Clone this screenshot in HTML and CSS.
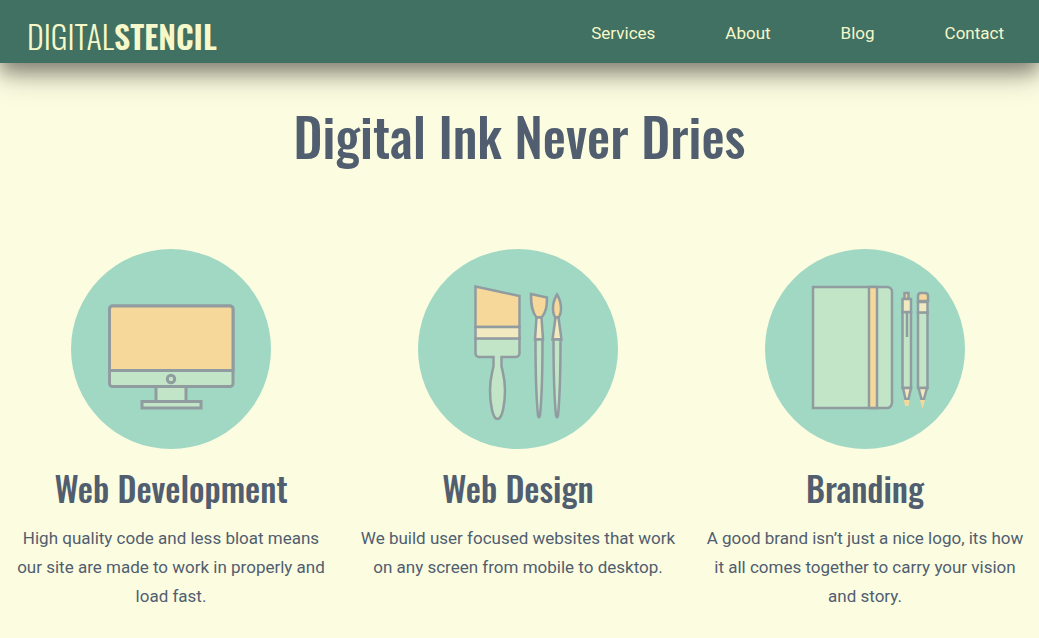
FILE: index.html
```html
<!DOCTYPE html>
<html lang="en">
<head>
<meta charset="utf-8">
<meta name="viewport" content="width=device-width, initial-scale=1">
<title>Digital Stencil</title>
<link rel="stylesheet" href="styles.css">
</head>
<body>
<header class="site-header">
  <a class="logo" href="#">DIGITAL<strong>STENCIL</strong></a>
  <nav class="site-nav">
    <a href="#services">Services</a>
    <a href="#about">About</a>
    <a href="#blog">Blog</a>
    <a href="#contact">Contact</a>
  </nav>
</header>
<main>
  <h1 class="headline">Digital Ink Never Dries</h1>
  <section class="services" id="services">
    <article class="service">
      <svg class="service-icon" viewBox="0 0 200 200" aria-hidden="true">
        <circle class="disc" cx="100" cy="100" r="100"/>
        <g class="heavy">
          <rect class="green" x="38.5" y="57" width="123.500" height="80.500" rx="3"/>
          <path class="orange" d="M38.500 121.500V60a3 3 0 0 1 3-3H159a3 3 0 0 1 3 3v61.500z"/>
          <circle class="green" cx="100" cy="130" r="3.700"/>
          <rect class="green" x="85" y="137.500" width="30" height="15"/>
          <rect class="green" x="71" y="152.500" width="59" height="6.500"/>
        </g>
      </svg>
      <h2>Web Development</h2>
      <p>High quality code and less bloat means our site are made to work in properly and load fast.</p>
    </article>
    <article class="service">
      <svg class="service-icon" viewBox="0 0 200 200" aria-hidden="true">
        <circle class="disc" cx="100" cy="100" r="100"/>
        <path class="green" d="M57.500 89v15.500a3.500 3.500 0 0 0 3.500 3.500h14.500v9C74 125 72 129 72 141c0 13 2.500 29 7.500 29s7.500-16 7.500-29c0-12-2-16-3.500-24v-9H98a3.500 3.500 0 0 0 3.500-3.500V89z"/>
        <path class="orange" d="M57.500 37.500l44 9.500v31h-44z"/>
        <path class="cream" d="M57.500 78h44v11.500h-44z"/>
        <path class="orange" d="M113 45l16 3.500c0 8-.5 14-5.500 20h-5c-5-6-5.500-14-5.500-23.500z"/>
        <path class="cream" d="M118.500 68.500h5l1.500 22h-8z"/>
        <path class="green" d="M117.500 90.500h7c0 33-1 61-2.500 76q-1 4-2 0c-1.500-15-2.500-43-2.500-76z"/>
        <path class="orange" d="M139 45.500c2.500 4 4 9 4 14q0 6-2.500 9h-3q-2.500-3-2.500-9c0-5 1.500-10 4-14z"/>
        <path class="cream" d="M137.500 68.500h3l3 22h-9z"/>
        <path class="green" d="M135.500 90.500h7c0 33-1 61-2.500 76q-1 4-2 0c-1.500-15-2.500-43-2.500-76z"/>
      </svg>
      <h2>Web Design</h2>
      <p>We build user focused websites that work on any screen from mobile to desktop.</p>
    </article>
    <article class="service">
      <svg class="service-icon" viewBox="0 0 200 200" aria-hidden="true">
        <circle class="disc" cx="100" cy="100" r="100"/>
        <path class="green" d="M48 38h74.500a4.500 4.500 0 0 1 4.500 4.500V154q-1 5-5 5H48z"/>
        <path class="orange" d="M104 38h8v121h-8z"/>
        <path class="orange" d="M139.500 44h4v6h-4zM153 52v-5q0-3 3-3h4q3 0 3 3v5z"/>
        <path class="green" d="M137.500 63h8.500v76h-8.500zM153 63h9.500v76H153z"/>
        <path class="cream" d="M137.500 50h8.500v13h-8.500zM153 53h9.500v10.500H153z"/>
        <path class="cream" d="M138 139h8l-2.500 11h-3zM153.500 139h8.500l-3 11h-2.500z"/>
        <path class="outline" d="M142 63v25"/>
        <path class="tip" d="M139 151h5.500l-1 6h-3.500zM155 151h5l-2.500 9z"/>
      </svg>
      <h2>Branding</h2>
      <p>A good brand isn’t just a nice logo, its how it all comes together to carry your vision and story.</p>
    </article>
  </section>
</main>
</body>
</html>
```
FILE: styles.css
```css
* {
  box-sizing: border-box;
}

body {
  margin: 0;
  background: #fcfce1;
  color: #505e70;
  font-family: Roboto, "Liberation Sans", sans-serif;
  font-size: 17px;
  line-height: 29px;
}

.site-header {
  position: relative;
  display: flex;
  align-items: center;
  justify-content: space-between;
  padding: 4px 35px 0 27px;
  min-height: 63px;
  background: #417162;
  box-shadow: 0 14px 28px rgba(0, 0, 0, 0.26), 0 8px 16px rgba(0, 0, 0, 0.3);
}

.site-header a {
  color: #f7f8c9;
  text-decoration: none;
}

.logo {
  padding-top: 4px;
  font-family: Oswald, "Liberation Sans Narrow", sans-serif;
  font-size: 32px;
  font-weight: 300;
}

.logo strong {
  font-weight: 600;
}

.site-nav {
  display: flex;
  gap: 70px;
}

.headline,
.service h2 {
  font-family: Oswald, "Liberation Sans Narrow", sans-serif;
  font-weight: 500;
  text-align: center;
}

.headline {
  margin: 34px 16px 74px;
  font-size: 52px;
  line-height: 78px;
}

.services {
  display: grid;
  grid-template-columns: repeat(3, 1fr);
  gap: 5px;
  padding-right: 3px;
}

.service {
  padding: 0 10px;
  text-align: center;
}

.service-icon {
  display: block;
  width: 200px;
  height: 200px;
  margin: 0 auto;
  stroke: #909ca0;
  stroke-width: 2.5;
}

.service h2 {
  margin: 15px 0 12px;
  font-size: 34px;
  line-height: 48px;
}

.service p {
  margin: 0;
}

.heavy {
  stroke-width: 3;
}

.disc {
  fill: #a0d8c3;
  stroke: none;
}

.green {
  fill: #c2e5c7;
}

.orange {
  fill: #f6d89b;
}

.cream {
  fill: #f1eac1;
}

.outline {
  fill: none;
}

.tip {
  fill: #f6d89b;
  stroke: none;
}
```
